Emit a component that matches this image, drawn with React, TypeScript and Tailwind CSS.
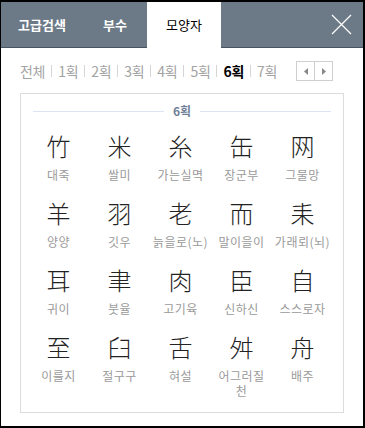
import React from 'react';

const FONT = { fontFamily: '"Noto Sans CJK KR", "Noto Sans", sans-serif' };

const strokes = ['전체', '1획', '2획', '3획', '4획', '5획', '6획', '7획'];

const chars: { ch: string; label: string }[] = [
  { ch: '竹', label: '대죽' },
  { ch: '米', label: '쌀미' },
  { ch: '糸', label: '가는실멱' },
  { ch: '缶', label: '장군부' },
  { ch: '网', label: '그물망' },
  { ch: '羊', label: '양양' },
  { ch: '羽', label: '깃우' },
  { ch: '老', label: '늙을로(노)' },
  { ch: '而', label: '말이을이' },
  { ch: '耒', label: '가래뢰(뇌)' },
  { ch: '耳', label: '귀이' },
  { ch: '聿', label: '붓율' },
  { ch: '肉', label: '고기육' },
  { ch: '臣', label: '신하신' },
  { ch: '自', label: '스스로자' },
  { ch: '至', label: '이를지' },
  { ch: '臼', label: '절구구' },
  { ch: '舌', label: '혀설' },
  { ch: '舛', label: '어그러질\n천' },
  { ch: '舟', label: '배주' },
];

export default function App() {
  return (
    <div style={FONT} className="w-[365px] h-[428px] bg-white border-2 border-l border-black flex flex-col">
      {/* Tabs */}
      <div className="h-[46px] shrink-0 flex bg-[#6c7a88] border-b border-[#4a5461]">
        <div className="w-[82px] flex items-center justify-center text-white text-[13px] font-bold">고급검색</div>
        <div className="w-[64px] flex items-center justify-center text-white text-[13px] font-bold">부수</div>
        <div className="w-[74px] h-[46px] bg-white flex items-center justify-center text-black text-[13px]">모양자</div>
        <div className="flex-1 flex items-center justify-end pr-[11px]">
          <svg width="21" height="21" viewBox="0 0 21 21">
            <path d="M1 1L20 20M20 1L1 20" stroke="#fff" strokeWidth="1.2" />
          </svg>
        </div>
      </div>

      {/* Stroke filter */}
      <div className="flex items-center mt-[13px] pl-[19px] pr-[30px] h-[20px]">
        <div className="flex items-center text-[14px] leading-none tracking-[-0.3px]">
          {strokes.map((s, i) => (
            <React.Fragment key={s}>
              {i > 0 && <span className="mx-[6px] w-px h-[12px] bg-[#d5d5d5]" />}
              <span className={s === '6획' ? 'text-black font-bold' : 'text-[#a3a3a3]'}>{s}</span>
            </React.Fragment>
          ))}
        </div>
        <div className="ml-auto shrink-0 flex border border-[#cfcfcf] h-[20px]">
          <div className="w-[18px] flex items-center justify-center border-r border-[#cfcfcf]">
            <svg width="4" height="7" viewBox="0 0 4 7"><path d="M4 0L0 3.5L4 7Z" fill="#888" /></svg>
          </div>
          <div className="w-[17px] flex items-center justify-center">
            <svg width="4" height="7" viewBox="0 0 4 7"><path d="M0 0L4 3.5L0 7Z" fill="#888" /></svg>
          </div>
        </div>
      </div>

      {/* Character box */}
      <div className="mx-[19px] mt-[12px] h-[320px] border border-[#dcdcdc] px-[7px]">
        <div className="flex items-center mt-[11px] px-[5px]">
          <div className="flex-1 h-px bg-[#dbe4f3]" />
          <span className="mx-[9px] text-[12px] font-bold text-[#6f7f97] leading-none">6획</span>
          <div className="flex-1 h-px bg-[#dbe4f3]" />
        </div>
        <div className="grid grid-cols-5 w-[305px] mt-[14px] gap-y-[16px]">
          {chars.map((c) => (
            <div key={c.ch} className="flex flex-col items-center">
              <span className="text-[24px] leading-[30px] font-light text-[#222]">{c.ch}</span>
              <span className="mt-[6px] text-[12px] leading-[15px] text-[#9a9a9a] tracking-[0.5px] text-center whitespace-pre">{c.label}</span>
            </div>
          ))}
        </div>
      </div>
    </div>
  );
}
